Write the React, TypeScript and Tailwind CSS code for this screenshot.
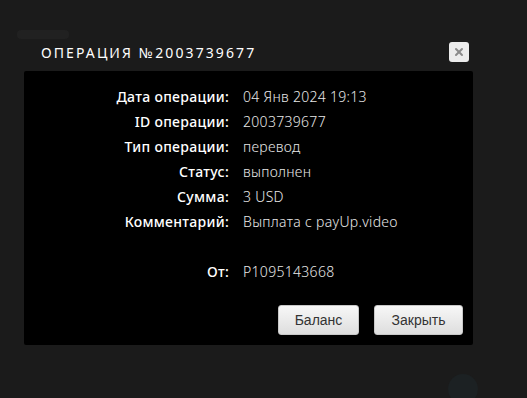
import { X } from "lucide-react";

const rows: { label: string; value: string }[] = [
  { label: "Дата операции:", value: "04 Янв 2024 19:13" },
  { label: "ID операции:", value: "2003739677" },
  { label: "Тип операции:", value: "перевод" },
  { label: "Статус:", value: "выполнен" },
  { label: "Сумма:", value: "3 USD" },
  { label: "Комментарий:", value: "Выплата с payUp.video" },
  { label: "", value: "" },
  { label: "От:", value: "P1095143668" },
];

function Btn({ children, w }: { children: string; w: string }) {
  return (
    <button
      className={`${w} h-[30px] rounded-[3px] border border-[#c8c8c8] bg-gradient-to-b from-[#f7f7f7] to-[#dedede] text-[14px] text-[#333] font-['Liberation_Sans',Arial,sans-serif]`}
    >
      {children}
    </button>
  );
}

export default function App() {
  return (
    <div className="relative h-[398px] w-[527px] overflow-hidden bg-[#1b1b1b] font-['Noto_Sans',sans-serif]">
      <div className="absolute left-[17px] top-[30px] h-[9px] w-[52px] rounded-sm bg-[#212121]" />
      <div className="absolute left-[448px] top-[374px] size-[30px] rounded-full bg-[#1c2123]" />

      <div className="relative flex h-[71px] items-center justify-between pb-[9px] pl-[41px] pr-[58px] pt-[42px]">
        <h2 className="text-[14px] font-normal uppercase tracking-[2.1px] text-white">
          Операция №2003739677
        </h2>
        <button className="flex size-[20px] items-center justify-center rounded-[3px] bg-[#ebebeb]">
          <X size={12} strokeWidth={4} color="#8a8a8a" />
        </button>
      </div>

      <div className="relative ml-[24px] flex h-[274px] w-[449px] flex-col rounded-[2px] bg-black">
        <div className="flex flex-col pt-[13px]">
          {rows.map((r, i) => (
            <div
              key={i}
              className="flex h-[25px] items-center text-[14px] tracking-[0.3px]"
            >
              <span className="w-[205px] text-right font-medium text-white">
                {r.label}
              </span>
              <span className="pl-[14px] font-light text-[#e8e8e8]">
                {r.value}
              </span>
            </div>
          ))}
        </div>
        <div className="mt-auto flex justify-end gap-[15px] pb-[10px] pr-[10px]">
          <Btn w="w-[81px]">Баланс</Btn>
          <Btn w="w-[89px]">Закрыть</Btn>
        </div>
      </div>
    </div>
  );
}
